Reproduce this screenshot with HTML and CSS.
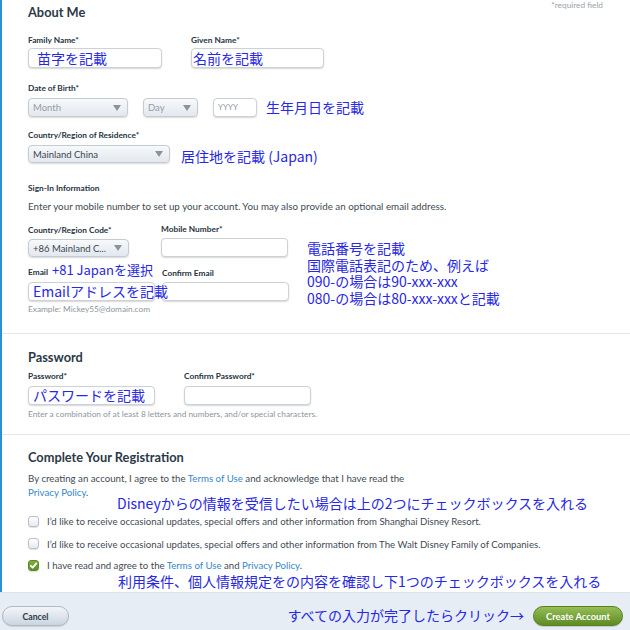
FILE: index.html
```html
<!DOCTYPE html>
<html lang="ja">
<head>
<meta charset="utf-8">
<title>Create Account</title>
<link rel="stylesheet" href="styles.css">
</head>
<body>
<div class="page">
  <section class="sec sec-about">
    <div class="head-row">
      <h2 class="sec-title">About Me</h2>
      <span class="req">*required field</span>
    </div>
    <div class="name-grid">
      <div class="field">
        <div class="lbl">Family Name*</div>
        <div class="inp inp-fam"><span class="note">苗字を記載</span></div>
      </div>
      <div class="field">
        <div class="lbl">Given Name*</div>
        <div class="inp inp-given"><span class="note">名前を記載</span></div>
      </div>
    </div>

    <div class="lbl lbl-dob">Date of Birth*</div>
    <div class="dob-row">
      <div class="sel sel-month muted"><span>Month</span><i class="arrow"></i></div>
      <div class="sel sel-day muted"><span>Day</span><i class="arrow"></i></div>
      <div class="inp inp-year">YYYY</div>
      <span class="note note-dob">生年月日を記載</span>
    </div>

    <div class="lbl lbl-country">Country/Region of Residence*</div>
    <div class="country-row">
      <div class="sel sel-country"><span>Mainland China</span><i class="arrow"></i></div>
      <span class="note note-country">居住地を記載 (Japan)</span>
    </div>

    <div class="lbl lbl-signin">Sign-In Information</div>
    <p class="intro">Enter your mobile number to set up your account. You may also provide an optional email address.</p>

    <div class="signin-grid">
      <div class="lbl lbl-code">Country/Region Code*</div>
      <div class="lbl lbl-mobile">Mobile Number*</div>
      <div class="sel sel-code"><span>+86 Mainland C...</span><i class="arrow"></i></div>
      <div class="inp inp-mobile"></div>
      <div class="lbl lbl-email">Email</div>
      <div class="lbl lbl-email lbl-cemail">Confirm Email</div>
      <div class="inp inp-email"><span class="note">Emailアドレスを記載</span></div>
      <div class="inp inp-cemail"></div>
    </div>
    <div class="hint hint-email">Example: Mickey55@domain.com</div>
  </section>

  <section class="sec sec-pass">
    <h2 class="sec-title">Password</h2>
    <div class="pass-grid">
      <div class="field">
        <div class="lbl lbl-pass">Password*</div>
        <div class="inp inp-pass"><span class="note">パスワードを記載</span></div>
      </div>
      <div class="field">
        <div class="lbl lbl-pass">Confirm Password*</div>
        <div class="inp inp-pass"></div>
      </div>
    </div>
    <div class="hint hint-pass">Enter a combination of at least 8 letters and numbers, and/or special characters.</div>
  </section>

  <section class="sec sec-reg">
    <h2 class="sec-title">Complete Your Registration</h2>
    <p class="terms">By creating an account, I agree to the <a class="lnk">Terms of Use</a> and acknowledge that I have read the<br><a class="lnk">Privacy Policy</a>.</p>
    <div class="checks">
      <div class="chk-row"><span class="box"></span><span>I’d like to receive occasional updates, special offers and other information from Shanghai Disney Resort.</span></div>
      <div class="chk-row"><span class="box"></span><span>I’d like to receive occasional updates, special offers and other information from The Walt Disney Family of Companies.</span></div>
      <div class="chk-row chk-last"><span class="box checked"><svg viewBox="0 0 11 11" width="11" height="11"><path d="M2.8 5.8 L4.7 7.7 L8.3 3.4" fill="none" stroke="#fff" stroke-width="1.8" stroke-linecap="round" stroke-linejoin="round"/></svg></span><span>I have read and agree to the <a class="lnk">Terms of Use</a> and <a class="lnk">Privacy Policy</a>.</span></div>
    </div>
  </section>

  <span class="note ann ann-phone">電話番号を記載<br>国際電話表記のため、例えば<br>090-の場合は90-xxx-xxx<br>080-の場合は80-xxx-xxxと記載</span>
  <span class="note ann ann-japan">+81 Japanを選択</span>
  <span class="note ann ann-disney">Disneyからの情報を受信したい場合は上の2つにチェックボックスを入れる</span>
  <span class="note ann ann-terms">利用条件、個人情報規定をの内容を確認し下1つのチェックボックスを入れる</span>
</div>

<footer class="foot">
  <div class="btn btn-cancel">Cancel</div>
  <span class="note note-foot">すべての入力が完了したらクリック→</span>
  <div class="btn btn-create">Create Account</div>
</footer>
</body>
</html>
```

FILE: styles.css
```css
* { box-sizing: border-box; }
html, body { margin: 0; padding: 0; }
body {
  width: 630px;
  height: 630px;
  overflow: hidden;
  background: #fff;
  font-family: Lato, "Open Sans", sans-serif;
  color: #3b4651;
}

.page {
  position: relative;
  border-left: 2px solid #2b8fd4;
}

.sec {
  padding: 0 27px 0 26px;
  border-bottom: 1px solid #e3e7eb;
}

.head-row {
  display: flex;
  justify-content: space-between;
  align-items: flex-start;
  height: 20px;
}

.sec-title {
  margin: 0;
  font-size: 12.8px;
  line-height: 16px;
  font-weight: 700;
  color: #2b3947;
}
.sec-about .sec-title { padding-top: 4px; }

.req {
  font-size: 8.3px;
  line-height: 10px;
  color: #9aa3ad;
}

.lbl {
  font-size: 8.3px;
  line-height: 10px;
  font-weight: 700;
  color: #27333f;
  white-space: nowrap;
}

.note {
  font-family: "Noto Sans CJK JP", "Noto Sans", sans-serif;
  font-size: 14px;
  line-height: 16.7px;
  color: #2727e6;
  white-space: nowrap;
}

.inp {
  height: 20px;
  background: #fff;
  border: 1px solid #cdd2d8;
  border-radius: 4px;
  box-shadow: 0 1px 1.5px rgba(0, 0, 0, 0.16);
}
.inp .note { line-height: 18px; display: block; }

.sel {
  height: 19px;
  display: flex;
  align-items: center;
  justify-content: space-between;
  padding: 0 6px 0 4px;
  border: 1px solid #c4cbd3;
  border-radius: 4px;
  background: linear-gradient(#f7f9fb, #e3e8ee);
  box-shadow: 0 1px 1.5px rgba(0, 0, 0, 0.14);
  font-size: 9.5px;
  color: #3b4651;
  white-space: nowrap;
}
.sel.muted { color: #949ca6; }
.arrow {
  flex: none;
  width: 0;
  height: 0;
  border-left: 4.5px solid transparent;
  border-right: 4.5px solid transparent;
  border-top: 6px solid #8b949d;
}

/* About me */
.name-grid {
  display: grid;
  grid-template-columns: 134px 133px;
  column-gap: 29px;
  margin-top: 15px;
}
.field .lbl { margin-bottom: 3px; }
.inp-fam .note { padding-left: 8px; }
.inp-given .note { padding-left: 1px; }

.lbl-dob { margin-top: 15px; margin-bottom: 5px; }
.dob-row { display: flex; align-items: center; height: 19px; }
.sel-month { width: 100px; }
.sel-day { width: 55px; margin-left: 15px; }
.inp-year {
  width: 44px;
  height: 19px;
  margin-left: 15px;
  margin-top: -1px;
  padding-left: 4px;
  font-size: 8px;
  line-height: 17px;
  color: #8e97a1;
}
.note-dob { margin-left: 9px; }

.lbl-country { margin-top: 13px; margin-bottom: 5px; }
.country-row { display: flex; align-items: center; height: 18px; }
.sel-country { width: 142px; height: 18px; }
.note-country { margin-left: 11px; margin-top: 2.5px; margin-bottom: -2.5px; }

.lbl-signin { margin-top: 20px; }
.intro {
  margin: 8px 0 0;
  font-size: 9.8px;
  line-height: 10px;
  color: #3f4a55;
  white-space: nowrap;
}

.signin-grid {
  display: grid;
  grid-template-columns: 133px 127px;
  grid-template-rows: 13px 19px 25px 19px;
  margin-top: 14px;
  align-items: end;
}
.lbl-code, .lbl-mobile { margin-bottom: 3px; }
.lbl-mobile { margin-bottom: 4px; }
.sel-code { width: 101px; height: 18px; }
.inp-mobile { width: 127px; height: 19px; }
.lbl-email { margin-bottom: 5px; }
.lbl-cemail { padding-left: 1px; margin-bottom: 4px; }
.inp-email { width: 127px; height: 19px; }
.inp-email .note { position: relative; z-index: 1; padding-left: 4px; line-height: 17px; }
.inp-cemail { width: 127px; height: 19px; margin-left: 1px; }

.hint {
  font-size: 8.3px;
  line-height: 10px;
  color: #8c96a0;
  white-space: nowrap;
}
.hint-email { margin-top: 3px; }
.sec-about { padding-bottom: 19px; }

/* Password */
.sec-pass { padding-top: 15px; padding-bottom: 15px; }
.pass-grid {
  display: grid;
  grid-template-columns: 156px 127px;
  margin-top: 6px;
}
.pass-grid .lbl-pass { margin-bottom: 5px; }
.inp-pass { width: 127px; height: 19px; }
.inp-pass .note { padding-left: 4px; line-height: 17px; }
.hint-pass { margin-top: 4px; }

/* Registration */
.sec-reg { padding-top: 14px; padding-bottom: 21px; border-bottom: none; }
.terms {
  margin: 6px 0 0;
  font-size: 9.7px;
  line-height: 14px;
  color: #3f4a55;
  white-space: nowrap;
}
.lnk { color: #3488c8; text-decoration: none; }
.checks { margin-top: 16px; }
.chk-row {
  height: 12px;
  display: flex;
  align-items: center;
  font-size: 9.65px;
  color: #3f4a55;
  white-space: nowrap;
}
.chk-row + .chk-row { margin-top: 10.5px; }
.chk-row.chk-last { margin-top: 9.5px; }
.box {
  width: 11px;
  height: 11px;
  flex: none;
  margin-right: 8px;
  border: 1px solid #b8bfc7;
  border-radius: 3px;
  background: linear-gradient(#ffffff, #e6eaee);
  box-shadow: 0 1px 1px rgba(0, 0, 0, 0.12);
}
.box.checked {
  border-color: #5a8a22;
  background: linear-gradient(#7fae3c, #5f9026);
}
.box svg { display: block; margin: -1px; }

/* annotations overlaying the form */
.ann { position: absolute; }
.ann-phone { left: 305px; top: 240px; }
.ann-japan { left: 50px; top: 262px; font-size: 13px; }
.ann-disney { left: 115px; top: 495px; }
.ann-terms { left: 116px; top: 573px; }

/* Footer */
.foot {
  height: 38px;
  display: flex;
  align-items: flex-start;
  padding: 13px 7px 0 2px;
  background: #e6edf5;
  border-top: 1px solid #dde4ec;
}
.btn {
  height: 20px;
  border-radius: 10px;
  display: flex;
  align-items: center;
  justify-content: center;
  font-size: 8.7px;
  font-weight: 700;
  white-space: nowrap;
}
.btn-cancel {
  width: 67px;
  color: #2e3b49;
  border: 1px solid #aeb9c6;
  background: linear-gradient(#f3f6f9, #cbd5e0);
  box-shadow: 0 1px 1px rgba(0, 0, 0, 0.12);
}
.btn-create {
  width: 90px;
  font-size: 9.3px;
  color: #fff;
  border: 1px solid #56811f;
  background: linear-gradient(#95be55, #5e8b25);
  box-shadow: 0 1px 1px rgba(0, 0, 0, 0.15);
}
.note-foot { margin-left: auto; margin-right: 9px; margin-top: 1px; }
```
